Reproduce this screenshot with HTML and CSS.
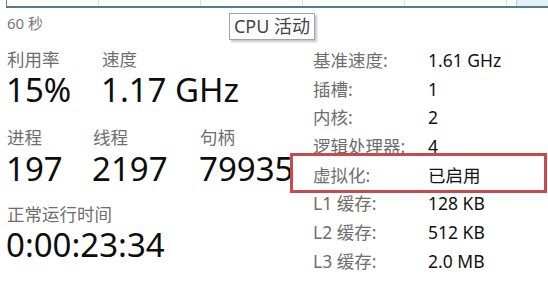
FILE: index.html
```html
<!DOCTYPE html>
<html lang="zh-CN">
<head>
<meta charset="utf-8">
<link rel="stylesheet" href="styles.css">
</head>
<body>
<div class="page">
  <div class="graph">
    <div class="cell first"></div>
    <div class="cell"></div>
    <div class="cell"></div>
    <div class="cell"></div>
    <div class="cell"></div>
    <div class="cell small"></div>
    <div class="fill"></div>
  </div>
  <div class="axis">60 秒</div>
  <div class="tooltip">CPU 活动</div>
  <div class="main">
    <div class="left">
      <div class="stats">
        <div class="stat w95">
          <div class="label">利用率</div>
          <div class="value">15%</div>
        </div>
        <div class="stat">
          <div class="label">速度</div>
          <div class="value">1.17 GHz</div>
        </div>
      </div>
      <div class="stats mid">
        <div class="stat w86">
          <div class="label">进程</div>
          <div class="value">197</div>
        </div>
        <div class="stat w107">
          <div class="label">线程</div>
          <div class="value">2197</div>
        </div>
        <div class="stat">
          <div class="label">句柄</div>
          <div class="value">79935</div>
        </div>
      </div>
      <div class="stats last">
        <div class="stat">
          <div class="label">正常运行时间</div>
          <div class="value">0:00:23:34</div>
        </div>
      </div>
    </div>
    <div class="right">
      <div class="row"><span class="k">基准速度:</span><span class="v">1.61 GHz</span></div>
      <div class="row"><span class="k">插槽:</span><span class="v">1</span></div>
      <div class="row"><span class="k">内核:</span><span class="v">2</span></div>
      <div class="row"><span class="k">逻辑处理器:</span><span class="v">4</span></div>
      <div class="row marked"><span class="k">虚拟化:</span><span class="v">已启用</span><div class="highlight"></div></div>
      <div class="row"><span class="k">L1 缓存:</span><span class="v">128 KB</span></div>
      <div class="row"><span class="k">L2 缓存:</span><span class="v">512 KB</span></div>
      <div class="row"><span class="k">L3 缓存:</span><span class="v">2.0 MB</span></div>
    </div>
  </div>
</div>
</body>
</html>
```
FILE: styles.css
```css
html, body {
  margin: 0;
  padding: 0;
  background: #ffffff;
}
body {
  font-family: "Noto Sans", "Noto Sans CJK SC", sans-serif;
  width: 548px;
  height: 285px;
  overflow: hidden;
}
.page {
  position: relative;
  width: 548px;
  height: 285px;
}
.graph {
  display: flex;
  margin-left: 6px;
  height: 6px;
  border-left: 1px solid #5f8794;
  border-bottom: 2px solid #537c89;
  background: #fbfdfe;
}
.cell {
  width: 101px;
  flex: none;
  border-right: 1px solid #d9e4e8;
}
.cell.first {
  width: 91px;
}
.cell.small {
  width: 9px;
  border-right: 1px solid #b8cbd3;
}
.fill {
  flex: 1;
  background: #e4f0f8;
}
.axis {
  margin-top: 6px;
  padding-left: 7px;
  height: 18px;
  line-height: 18px;
  font-size: 15px;
  color: #787878;
}
.tooltip {
  position: absolute;
  left: 229px;
  top: 13px;
  width: 84px;
  height: 25px;
  border: 1px solid #a3a3a3;
  background: #fdfdfd;
  box-shadow: 2px 2px 2px rgba(0, 0, 0, 0.22);
  font-size: 18px;
  line-height: 25px;
  text-align: center;
  color: #444444;
}
.main {
  display: flex;
  margin-top: 14px;
}
.left {
  width: 290px;
  flex: none;
  overflow: hidden;
  white-space: nowrap;
}
.stats {
  display: flex;
  padding-left: 7px;
}
.stat {
  flex: none;
}
.w95 { width: 95px; }
.w86 { width: 86px; }
.w107 { width: 107px; }
.label {
  height: 22px;
  line-height: 22px;
  font-size: 17.5px;
  color: #6e6e6e;
  margin-top: 2px;
}
.value {
  height: 40px;
  line-height: 40px;
  font-size: 33px;
  color: #0d0d0d;
  margin-left: -1px;
}
.stats.mid {
  margin-top: 13.5px;
}
.stats.mid .value {
  margin-top: 1px;
}
.stats.last {
  margin-top: 12.5px;
}
.right {
  flex: 1;
}
.row {
  position: relative;
  display: flex;
  height: 28.7px;
  line-height: 28.7px;
  font-size: 17.5px;
  white-space: nowrap;
}
.k {
  width: 115px;
  padding-left: 23px;
  flex: none;
  color: #6e6e6e;
}
.v {
  color: #111111;
}
.highlight {
  position: absolute;
  left: 0;
  top: -7.4px;
  width: 251px;
  height: 34px;
  border: 3px solid #c94a4c;
}
```
